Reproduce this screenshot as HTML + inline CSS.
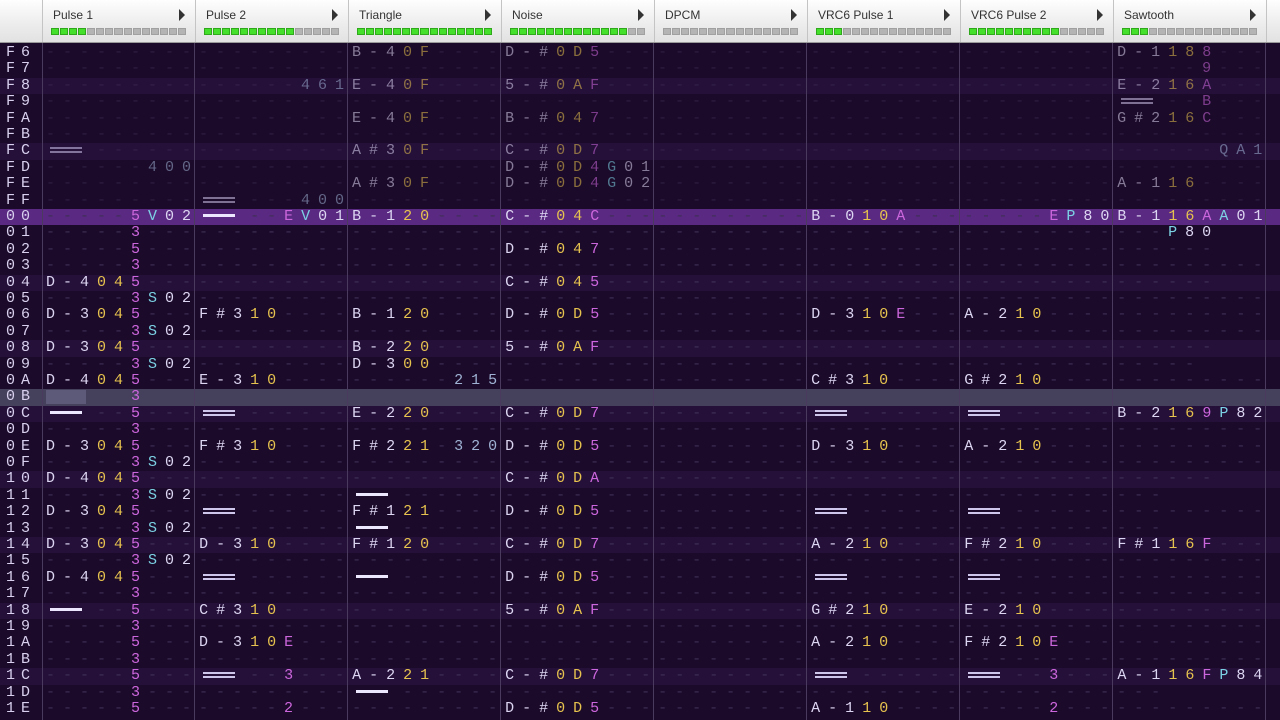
<!DOCTYPE html>
<html><head><meta charset="utf-8"><style>
*{margin:0;padding:0;box-sizing:border-box}
body{width:1280px;height:720px;overflow:hidden;background:#1b0a29;font-family:"Liberation Mono",monospace;position:relative}
#hd{position:absolute;left:0;top:0;width:1280px;height:43px;background:linear-gradient(#fefefe,#ececec 60%,#e2e2e2);border-bottom:1px solid #9a9a9a}
.ch{position:absolute;top:0;height:42px;width:153px;border-left:1px solid #c4c4c4}
.ch .nm{position:absolute;left:10px;top:8px;font:12px "Liberation Sans",sans-serif;color:#333}
.ch .ar{position:absolute;left:136px;top:9px;width:0;height:0;border-top:6px solid transparent;border-bottom:6px solid transparent;border-left:6px solid #333}
.mt{position:absolute;left:8px;top:28px;height:7px;width:135px;display:flex;gap:1px}
.mt b{flex:1;background:#b4b4b4;border:1px solid #a0a0a0}
.mt b.g{background:#44e02c;border-color:#2fa81c}
.row{position:absolute;left:0;width:1280px;height:16.4px;overflow:hidden}
.row.m{background:#25103a}
.row.h{background:#5a2a82}
.row.cur{background:#45405c}
.t{position:absolute;left:46px;top:0;white-space:pre;font-size:15px;line-height:16.4px;letter-spacing:8px;color:#3e2f56}
.rn{position:absolute;left:6px;top:0;white-space:pre;font-size:15px;line-height:16.4px;letter-spacing:6px;color:#d8d0ee}
.dim .t{opacity:.55}
n{color:#ddd6f2}k{color:#e6c24e}v{color:#cc66dc}e{color:#7cd2e4}x{color:#9fb2d4}
c,r{position:relative}
c::before,c::after{content:"";position:absolute;left:4px;width:32px;height:2px;background:#cfc6ec}
c::before{top:5px}c::after{top:9px}
r::before{content:"";position:absolute;left:4px;top:6px;width:32px;height:3px;background:#ece6ff}
.sep{position:absolute;top:43px;width:1px;height:677px;background:#4a3a5e}
</style></head><body>
<div id="hd">
<div class="ch" style="left:42px"><span class="nm">Pulse 1</span><span class="ar"></span><div class="mt"><b class="g"></b><b class="g"></b><b class="g"></b><b class="g"></b><b></b><b></b><b></b><b></b><b></b><b></b><b></b><b></b><b></b><b></b><b></b></div></div>
<div class="ch" style="left:195px"><span class="nm">Pulse 2</span><span class="ar"></span><div class="mt"><b class="g"></b><b class="g"></b><b class="g"></b><b class="g"></b><b class="g"></b><b class="g"></b><b class="g"></b><b class="g"></b><b class="g"></b><b class="g"></b><b></b><b></b><b></b><b></b><b></b></div></div>
<div class="ch" style="left:348px"><span class="nm">Triangle</span><span class="ar"></span><div class="mt"><b class="g"></b><b class="g"></b><b class="g"></b><b class="g"></b><b class="g"></b><b class="g"></b><b class="g"></b><b class="g"></b><b class="g"></b><b class="g"></b><b class="g"></b><b class="g"></b><b class="g"></b><b class="g"></b><b class="g"></b></div></div>
<div class="ch" style="left:501px"><span class="nm">Noise</span><span class="ar"></span><div class="mt"><b class="g"></b><b class="g"></b><b class="g"></b><b class="g"></b><b class="g"></b><b class="g"></b><b class="g"></b><b class="g"></b><b class="g"></b><b class="g"></b><b class="g"></b><b class="g"></b><b class="g"></b><b></b><b></b></div></div>
<div class="ch" style="left:654px"><span class="nm">DPCM</span><span class="ar"></span><div class="mt"><b></b><b></b><b></b><b></b><b></b><b></b><b></b><b></b><b></b><b></b><b></b><b></b><b></b><b></b><b></b></div></div>
<div class="ch" style="left:807px"><span class="nm">VRC6 Pulse 1</span><span class="ar"></span><div class="mt"><b class="g"></b><b class="g"></b><b class="g"></b><b></b><b></b><b></b><b></b><b></b><b></b><b></b><b></b><b></b><b></b><b></b><b></b></div></div>
<div class="ch" style="left:960px"><span class="nm">VRC6 Pulse 2</span><span class="ar"></span><div class="mt"><b class="g"></b><b class="g"></b><b class="g"></b><b class="g"></b><b class="g"></b><b class="g"></b><b class="g"></b><b class="g"></b><b class="g"></b><b class="g"></b><b></b><b></b><b></b><b></b><b></b></div></div>
<div class="ch" style="left:1113px"><span class="nm">Sawtooth</span><span class="ar"></span><div class="mt"><b class="g"></b><b class="g"></b><b class="g"></b><b></b><b></b><b></b><b></b><b></b><b></b><b></b><b></b><b></b><b></b><b></b><b></b></div></div>
<div class="ch" style="left:1266px;width:14px"></div>
</div>

<div class="row dim" style="top:45px"><span class="rn">F6</span><span class="t">------------------<n>B-4</n><k>0F</k>----<n>D-#</n><k>0D</k><v>5</v>------------------------------<n>D-1</n><k>18</k><v>8</v>---</span></div>
<div class="row dim" style="top:61.4px"><span class="rn">F7</span><span class="t">--------------------------------------------------------------------<v>9</v>---</span></div>
<div class="row dim m" style="top:77.8px"><span class="rn">F8</span><span class="t">---------------<x>461</x><n>E-4</n><k>0F</k>----<n>5-#</n><k>0A</k><v>F</v>------------------------------<n>E-2</n><k>16</k><v>A</v>---</span></div>
<div class="row dim" style="top:94.2px"><span class="rn">F9</span><span class="t">---------------------------------------------------------------<c>   </c>--<v>B</v>---</span></div>
<div class="row dim" style="top:110.6px"><span class="rn">FA</span><span class="t">------------------<n>E-4</n><k>0F</k>----<n>B-#</n><k>04</k><v>7</v>------------------------------<n>G#2</n><k>16</k><v>C</v>---</span></div>
<div class="row dim" style="top:127px"><span class="rn">FB</span><span class="t">------------------------------------------------------------------------</span></div>
<div class="row dim m" style="top:143.4px"><span class="rn">FC</span><span class="t"><c>   </c>---------------<n>A#3</n><k>0F</k>----<n>C-#</n><k>0D</k><v>7</v>------------------------------------<x>QA1</x></span></div>
<div class="row dim" style="top:159.8px"><span class="rn">FD</span><span class="t">------<x>400</x>------------------<n>D-#</n><k>0D</k><v>4</v><e>G</e><n>01</n>------------------------------------</span></div>
<div class="row dim" style="top:176.2px"><span class="rn">FE</span><span class="t">------------------<n>A#3</n><k>0F</k>----<n>D-#</n><k>0D</k><v>4</v><e>G</e><n>02</n>---------------------------<n>A-1</n><k>16</k>----</span></div>
<div class="row dim" style="top:192.6px"><span class="rn">FF</span><span class="t">---------<c>   </c>---<x>400</x>------------------------------------------------------</span></div>
<div class="row h" style="top:209px"><span class="rn">00</span><span class="t">-----<v>5</v><e>V</e><n>02</n><r>   </r>--<v>E</v><e>V</e><n>01</n><n>B-1</n><k>20</k>----<n>C-#</n><k>04</k><v>C</v>------------<n>B-0</n><k>10</k><v>A</v>--------<v>E</v><e>P</e><n>80</n><n>B-1</n><k>16</k><v>A</v><e>A</e><n>01</n></span></div>
<div class="row" style="top:225.4px"><span class="rn">01</span><span class="t">-----<v>3</v>------------------------------------------------------------<e>P</e><n>80</n></span></div>
<div class="row" style="top:241.8px"><span class="rn">02</span><span class="t">-----<v>5</v>---------------------<n>D-#</n><k>04</k><v>7</v>------------------------------------</span></div>
<div class="row" style="top:258.2px"><span class="rn">03</span><span class="t">-----<v>3</v>------------------------------------------------------------------</span></div>
<div class="row m" style="top:274.6px"><span class="rn">04</span><span class="t"><n>D-4</n><k>04</k><v>5</v>---------------------<n>C-#</n><k>04</k><v>5</v>------------------------------------</span></div>
<div class="row" style="top:291px"><span class="rn">05</span><span class="t">-----<v>3</v><e>S</e><n>02</n>---------------------------------------------------------------</span></div>
<div class="row" style="top:307.4px"><span class="rn">06</span><span class="t"><n>D-3</n><k>04</k><v>5</v>---<n>F#3</n><k>10</k>----<n>B-1</n><k>20</k>----<n>D-#</n><k>0D</k><v>5</v>------------<n>D-3</n><k>10</k><v>E</v>---<n>A-2</n><k>10</k>-------------</span></div>
<div class="row" style="top:323.8px"><span class="rn">07</span><span class="t">-----<v>3</v><e>S</e><n>02</n>---------------------------------------------------------------</span></div>
<div class="row m" style="top:340.2px"><span class="rn">08</span><span class="t"><n>D-3</n><k>04</k><v>5</v>------------<n>B-2</n><k>20</k>----<n>5-#</n><k>0A</k><v>F</v>------------------------------------</span></div>
<div class="row" style="top:356.6px"><span class="rn">09</span><span class="t">-----<v>3</v><e>S</e><n>02</n>---------<n>D-3</n><k>00</k>---------------------------------------------</span></div>
<div class="row" style="top:373px"><span class="rn">0A</span><span class="t"><n>D-4</n><k>04</k><v>5</v>---<n>E-3</n><k>10</k>----------<x>215</x>------------------<n>C#3</n><k>10</k>----<n>G#2</n><k>10</k>-------------</span></div>
<div class="row cur" style="top:389.4px"><div style="position:absolute;left:46px;top:1px;width:40px;height:14px;background:#5c5a78"></div><span class="rn">0B</span><span class="t" style="color:transparent">-----<v>3</v>------------------------------------------------------------------</span></div>
<div class="row m" style="top:405.8px"><span class="rn">0C</span><span class="t"><r>   </r>--<v>5</v>---<c>   </c>------<n>E-2</n><k>20</k>----<n>C-#</n><k>0D</k><v>7</v>------------<c>   </c>------<c>   </c>------<n>B-2</n><k>16</k><v>9</v><e>P</e><n>82</n></span></div>
<div class="row" style="top:422.2px"><span class="rn">0D</span><span class="t">-----<v>3</v>------------------------------------------------------------------</span></div>
<div class="row" style="top:438.6px"><span class="rn">0E</span><span class="t"><n>D-3</n><k>04</k><v>5</v>---<n>F#3</n><k>10</k>----<n>F#2</n><k>21</k>-<x>320</x><n>D-#</n><k>0D</k><v>5</v>------------<n>D-3</n><k>10</k>----<n>A-2</n><k>10</k>-------------</span></div>
<div class="row" style="top:455px"><span class="rn">0F</span><span class="t">-----<v>3</v><e>S</e><n>02</n>---------------------------------------------------------------</span></div>
<div class="row m" style="top:471.4px"><span class="rn">10</span><span class="t"><n>D-4</n><k>04</k><v>5</v>---------------------<n>C-#</n><k>0D</k><v>A</v>------------------------------------</span></div>
<div class="row" style="top:487.8px"><span class="rn">11</span><span class="t">-----<v>3</v><e>S</e><n>02</n>---------<r>   </r>---------------------------------------------</span></div>
<div class="row" style="top:504.2px"><span class="rn">12</span><span class="t"><n>D-3</n><k>04</k><v>5</v>---<c>   </c>------<n>F#1</n><k>21</k>----<n>D-#</n><k>0D</k><v>5</v>------------<c>   </c>------<c>   </c>---------------</span></div>
<div class="row" style="top:520.6px"><span class="rn">13</span><span class="t">-----<v>3</v><e>S</e><n>02</n>---------<r>   </r>---------------------------------------------</span></div>
<div class="row m" style="top:537px"><span class="rn">14</span><span class="t"><n>D-3</n><k>04</k><v>5</v>---<n>D-3</n><k>10</k>----<n>F#1</n><k>20</k>----<n>C-#</n><k>0D</k><v>7</v>------------<n>A-2</n><k>10</k>----<n>F#2</n><k>10</k>----<n>F#1</n><k>16</k><v>F</v>---</span></div>
<div class="row" style="top:553.4px"><span class="rn">15</span><span class="t">-----<v>3</v><e>S</e><n>02</n>---------------------------------------------------------------</span></div>
<div class="row" style="top:569.8px"><span class="rn">16</span><span class="t"><n>D-4</n><k>04</k><v>5</v>---<c>   </c>------<r>   </r>------<n>D-#</n><k>0D</k><v>5</v>------------<c>   </c>------<c>   </c>---------------</span></div>
<div class="row" style="top:586.2px"><span class="rn">17</span><span class="t">-----<v>3</v>------------------------------------------------------------------</span></div>
<div class="row m" style="top:602.6px"><span class="rn">18</span><span class="t"><r>   </r>--<v>5</v>---<n>C#3</n><k>10</k>-------------<n>5-#</n><k>0A</k><v>F</v>------------<n>G#2</n><k>10</k>----<n>E-2</n><k>10</k>-------------</span></div>
<div class="row" style="top:619px"><span class="rn">19</span><span class="t">-----<v>3</v>------------------------------------------------------------------</span></div>
<div class="row" style="top:635.4px"><span class="rn">1A</span><span class="t">-----<v>5</v>---<n>D-3</n><k>10</k><v>E</v>------------------------------<n>A-2</n><k>10</k>----<n>F#2</n><k>10</k><v>E</v>------------</span></div>
<div class="row" style="top:651.8px"><span class="rn">1B</span><span class="t">-----<v>3</v>------------------------------------------------------------------</span></div>
<div class="row m" style="top:668.2px"><span class="rn">1C</span><span class="t">-----<v>5</v>---<c>   </c>--<v>3</v>---<n>A-2</n><k>21</k>----<n>C-#</n><k>0D</k><v>7</v>------------<c>   </c>------<c>   </c>--<v>3</v>---<n>A-1</n><k>16</k><v>F</v><e>P</e><n>84</n></span></div>
<div class="row" style="top:684.6px"><span class="rn">1D</span><span class="t">-----<v>3</v>------------<r>   </r>---------------------------------------------</span></div>
<div class="row" style="top:701px"><span class="rn">1E</span><span class="t">-----<v>5</v>--------<v>2</v>------------<n>D-#</n><k>0D</k><v>5</v>------------<n>A-1</n><k>10</k>---------<v>2</v>------------</span></div>

<div class="sep" style="left:42px"></div><div class="sep" style="left:194px"></div><div class="sep" style="left:347px"></div><div class="sep" style="left:500px"></div><div class="sep" style="left:653px"></div><div class="sep" style="left:806px"></div><div class="sep" style="left:959px"></div><div class="sep" style="left:1112px"></div><div class="sep" style="left:1265px"></div>
</body></html>
